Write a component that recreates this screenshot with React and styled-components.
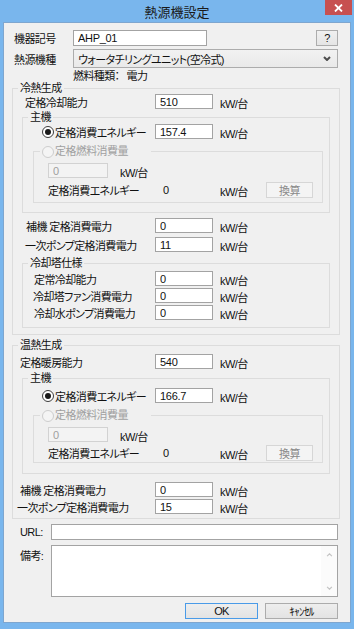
import React from 'react';
import styled, { createGlobalStyle } from 'styled-components';

const GlobalStyle = createGlobalStyle`
  html, body {
    margin: 0;
    padding: 0;
    background: #79b6ed;
  }
  body {
    font-family: "Liberation Sans", "Noto Sans CJK JP", sans-serif;
    font-size: 11px;
    font-feature-settings: "palt";
    letter-spacing: -0.6px;
    color: #111;
  }
`;

const Frame = styled.div`
  width: 354px;
  height: 629px;
  box-sizing: border-box;
  padding: 0 3px 6px;
  background: #79b6ed;
  display: flex;
  flex-direction: column;
`;

const TitleBar = styled.div`
  height: 22px;
  flex-shrink: 0;
  display: grid;
  grid-template-columns: 1fr auto 1fr;
`;

const Title = styled.div`
  grid-column: 2;
  align-self: center;
  font-family: "Noto Sans CJK JP", sans-serif;
  font-size: 13px;
  letter-spacing: 0;
  line-height: 1;
  color: #1b1b1b;
`;

const CloseButton = styled.div`
  grid-column: 3;
  justify-self: end;
  width: 27px;
  height: 15px;
  margin-right: -1px;
  background: #c75050;
  display: flex;
  align-items: center;
  justify-content: center;
`;

const Client = styled.div`
  flex: 1;
  background: #f0f0f0;
  border: 1px solid #7ea6cf;
  padding: 7px 10px 0 8px;
`;

const TopRow = styled.div`
  display: flex;
  align-items: center;
  height: ${p => p.$h}px;
  margin-top: ${p => p.$mt || 0}px;
`;

const TopLabel = styled.span`
  width: 59px;
  padding-left: 2px;
  flex-shrink: 0;
`;

const TextBox = styled.input`
  box-sizing: border-box;
  width: ${p => p.$w || 58}px;
  height: ${p => p.$h || 15}px;
  margin: 0;
  padding: 0 0 0 4px;
  border: 1px solid ${p => (p.disabled ? '#d2d2d2' : '#a3a3a3')};
  background: ${p => (p.disabled ? '#f3f3f3' : '#fff')};
  color: ${p => (p.disabled ? '#a0a0a0' : '#111')};
  font: 11px "Liberation Sans", "Noto Sans CJK JP", sans-serif;
  letter-spacing: -0.3px;
  outline: none;
  flex-shrink: 0;
`;

const HelpButton = styled.div`
  margin-left: auto;
  margin-right: 2px;
  width: 22px;
  height: 16px;
  box-sizing: border-box;
  border: 1px solid #acacac;
  background: linear-gradient(#f0f0f0, #e5e5e5);
  display: flex;
  align-items: center;
  justify-content: center;
  font-size: 11px;
`;

const Combo = styled.div`
  flex: 1;
  margin-right: 2px;
  height: 19px;
  box-sizing: border-box;
  border: 1px solid #acacac;
  background: linear-gradient(#f2f2f2, #e9e9e9);
  display: flex;
  align-items: center;
  justify-content: space-between;
  padding: 0 6px 0 4px;
`;

const FuelLine = styled.div`
  height: 12px;
  line-height: 12px;
  margin-top: 2px;
  padding-left: 61px;
  display: flex;
`;

const FuelValue = styled.span`
  margin-left: 7px;
`;

const Group = styled.fieldset`
  margin: ${p => p.$m || '0'};
  padding: 0 0 ${p => p.$pb || 0}px;
  border: 1px solid #dcdcdc;
  min-width: 0;
`;

const Legend = styled.legend`
  padding: 0 2px;
  margin-left: ${p => p.$ml ?? 5}px;
  width: ${p => (p.$w ? `${p.$w}px` : 'auto')};
  height: ${p => p.$h || 12}px;
  line-height: ${p => p.$h || 12}px;
  color: ${p => (p.$disabled ? '#a0a0a0' : '#111')};
  display: flex;
  align-items: center;
  gap: 1px;
`;

const Field = styled.div`
  display: flex;
  align-items: center;
  height: ${p => p.$h || 15}px;
  margin-top: ${p => p.$mt || 0}px;
  padding-left: ${p => p.$indent || 0}px;
`;

const FieldLabel = styled.span`
  width: ${p => p.$w}px;
  flex-shrink: 0;
  white-space: nowrap;
  display: flex;
  align-items: center;
  gap: 1px;
`;

const Unit = styled.span`
  margin-left: ${p => p.$ml ?? 7}px;
  padding-top: 2px;
  white-space: nowrap;
  width: ${p => (p.$w ? `${p.$w}px` : 'auto')};
  flex-shrink: 0;
`;

const Value = styled.span`
  width: ${p => p.$w}px;
  flex-shrink: 0;
`;

const Radio = styled.span`
  width: 12px;
  height: 12px;
  box-sizing: border-box;
  border-radius: 50%;
  border: 1px solid ${p => (p.$disabled ? '#cdcdcd' : '#3c3c3c')};
  background: ${p => (p.$disabled ? '#f4f4f4' : '#fff')};
  display: inline-flex;
  align-items: center;
  justify-content: center;
  flex-shrink: 0;

  &::after {
    content: '';
    display: ${p => (p.$checked ? 'block' : 'none')};
    width: 6px;
    height: 6px;
    border-radius: 50%;
    background: #1a1a1a;
  }
`;

const SmallButton = styled.div`
  width: 47px;
  height: 16px;
  box-sizing: border-box;
  border: 1px solid ${p => (p.$disabled ? '#d6d6d6' : '#acacac')};
  background: ${p => (p.$disabled ? '#f4f4f4' : '#e5e5e5')};
  color: ${p => (p.$disabled ? '#8a8a8a' : '#111')};
  display: flex;
  align-items: center;
  justify-content: center;
  flex-shrink: 0;
`;

const LabeledBox = styled.div`
  display: flex;
  align-items: ${p => (p.$top ? 'flex-start' : 'center')};
  margin-top: ${p => p.$mt || 0}px;
`;

const SideLabel = styled.span`
  box-sizing: border-box;
  width: 39px;
  padding-left: 8px;
  padding-top: ${p => p.$pt || 0}px;
  flex-shrink: 0;
`;

const Memo = styled.div`
  flex: 1;
  margin-right: 2px;
  height: 52px;
  box-sizing: border-box;
  border: 1px solid #a3a3a3;
  background: #fff;
  display: flex;
  justify-content: flex-end;
`;

const ScrollTrack = styled.div`
  width: 16px;
  display: flex;
  flex-direction: column;
  justify-content: space-between;
  align-items: center;
  padding: 7px 0 6px;
  background: #fbfbfb;
`;

const ButtonBar = styled.div`
  display: flex;
  justify-content: flex-end;
  gap: 7px;
  margin: 6px 2px 0 0;
`;

const PushButton = styled.div`
  width: 73px;
  height: 16px;
  box-sizing: border-box;
  border: 1px solid ${p => (p.$default ? '#4a9be8' : '#acacac')};
  background: linear-gradient(#eeeeee, #e3e3e3);
  display: flex;
  align-items: center;
  justify-content: center;
`;

const CloseIcon = () => (
  <svg width="9" height="8" viewBox="0 0 9 8">
    <path d="M1 0.5 L8 7.5 M8 0.5 L1 7.5" stroke="#fff" strokeWidth="1.8" fill="none" />
  </svg>
);

const ChevronDown = ({ color = '#4d4d4d', w = 8, h = 5, sw = 2 }) => (
  <svg width={w} height={h} viewBox="0 0 8 5">
    <path d="M1 1 L4 4 L7 1" stroke={color} strokeWidth={sw} fill="none" />
  </svg>
);

const ChevronUp = ({ color = '#c4c4c4' }) => (
  <svg width="7" height="4" viewBox="0 0 8 5">
    <path d="M1 4 L4 1 L7 4" stroke={color} strokeWidth="1.5" fill="none" />
  </svg>
);

function MainUnit({ energy, mt, radioMt, calcMt, boxPb, pb }) {
  return (
    <Group $m={`${mt}px 9px 0`} $pb={pb}>
      <Legend>主機</Legend>
      <Field $mt={radioMt} $indent={19}>
        <FieldLabel $w={113}>
          <Radio $checked />
          定格消費エネルギー
        </FieldLabel>
        <TextBox defaultValue={energy} />
        <Unit>kW/台</Unit>
      </Field>
      <Group $m="6px 6px 0 10px" $pb={boxPb}>
        <Legend $ml={6} $w={107} $h={13} $disabled>
          <Radio $disabled />
          定格燃料消費量
        </Legend>
        <Field $mt={5} $indent={14}>
          <TextBox $w={60} defaultValue="0" disabled />
          <Unit $ml={12}>kW/台</Unit>
        </Field>
        <Field $mt={calcMt} $h={16} $indent={14}>
          <FieldLabel $w={115}>定格消費エネルギー</FieldLabel>
          <Value $w={57}>0</Value>
          <Unit $ml={0} $w={46}>kW/台</Unit>
          <SmallButton $disabled>換算</SmallButton>
        </Field>
      </Group>
    </Group>
  );
}

export default function App() {
  return (
    <>
      <GlobalStyle />
      <Frame>
        <TitleBar>
          <Title>熱源機設定</Title>
          <CloseButton>
            <CloseIcon />
          </CloseButton>
        </TitleBar>
        <Client>
          <TopRow $h={16}>
            <TopLabel>機器記号</TopLabel>
            <TextBox $w={134} $h={16} defaultValue="AHP_01" />
            <HelpButton>?</HelpButton>
          </TopRow>
          <TopRow $h={19} $mt={3}>
            <TopLabel>熱源機種</TopLabel>
            <Combo>
              <span>ウォータチリングユニット(空冷式)</span>
              <ChevronDown />
            </Combo>
          </TopRow>
          <FuelLine>
            <span>燃料種類</span>
            <span>：</span>
            <FuelValue>電力</FuelValue>
          </FuelLine>

          <Group $pb={6}>
            <Legend>冷熱生成</Legend>
            <Field $indent={12}>
              <FieldLabel $w={130}>定格冷却能力</FieldLabel>
              <TextBox defaultValue="510" />
              <Unit>kW/台</Unit>
            </Field>
            <MainUnit energy="157.4" mt={2} radioMt={1} calcMt={4} boxPb={4} pb={9} />
            <Field $mt={5} $indent={13}>
              <FieldLabel $w={129}>補機 定格消費電力</FieldLabel>
              <TextBox defaultValue="0" />
              <Unit>kW/台</Unit>
            </Field>
            <Field $mt={4} $indent={12}>
              <FieldLabel $w={130}>一次ポンプ定格消費電力</FieldLabel>
              <TextBox defaultValue="11" />
              <Unit>kW/台</Unit>
            </Field>
            <Group $m="5px 9px 0" $pb={7}>
              <Legend>冷却塔仕様</Legend>
              <Field $mt={2} $indent={11}>
                <FieldLabel $w={121}>定常冷却能力</FieldLabel>
                <TextBox defaultValue="0" />
                <Unit>kW/台</Unit>
              </Field>
              <Field $mt={2} $indent={10}>
                <FieldLabel $w={122}>冷却塔ファン消費電力</FieldLabel>
                <TextBox defaultValue="0" />
                <Unit>kW/台</Unit>
              </Field>
              <Field $mt={2} $indent={11}>
                <FieldLabel $w={121}>冷却水ポンプ消費電力</FieldLabel>
                <TextBox defaultValue="0" />
                <Unit>kW/台</Unit>
              </Field>
            </Group>
          </Group>

          <Group $m="4px 0 0" $pb={4}>
            <Legend>温熱生成</Legend>
            <Field $mt={3} $indent={7}>
              <FieldLabel $w={135}>定格暖房能力</FieldLabel>
              <TextBox defaultValue="540" />
              <Unit>kW/台</Unit>
            </Field>
            <MainUnit energy="166.7" mt={3} radioMt={4} calcMt={3} boxPb={1} pb={10} />
            <Field $mt={8} $indent={7}>
              <FieldLabel $w={135}>補機 定格消費電力</FieldLabel>
              <TextBox defaultValue="0" />
              <Unit>kW/台</Unit>
            </Field>
            <Field $mt={2} $indent={4}>
              <FieldLabel $w={138}>一次ポンプ定格消費電力</FieldLabel>
              <TextBox defaultValue="15" />
              <Unit>kW/台</Unit>
            </Field>
          </Group>

          <LabeledBox $mt={5}>
            <SideLabel>URL:</SideLabel>
            <TextBox $w={287} $h={16} defaultValue="" />
          </LabeledBox>
          <LabeledBox $mt={5} $top>
            <SideLabel $pt={2}>備考:</SideLabel>
            <Memo>
              <ScrollTrack>
                <ChevronUp />
                <ChevronDown color="#c4c4c4" w={7} h={4} sw={1.5} />
              </ScrollTrack>
            </Memo>
          </LabeledBox>
          <ButtonBar>
            <PushButton $default>OK</PushButton>
            <PushButton>ｷｬﾝｾﾙ</PushButton>
          </ButtonBar>
        </Client>
      </Frame>
    </>
  );
}
